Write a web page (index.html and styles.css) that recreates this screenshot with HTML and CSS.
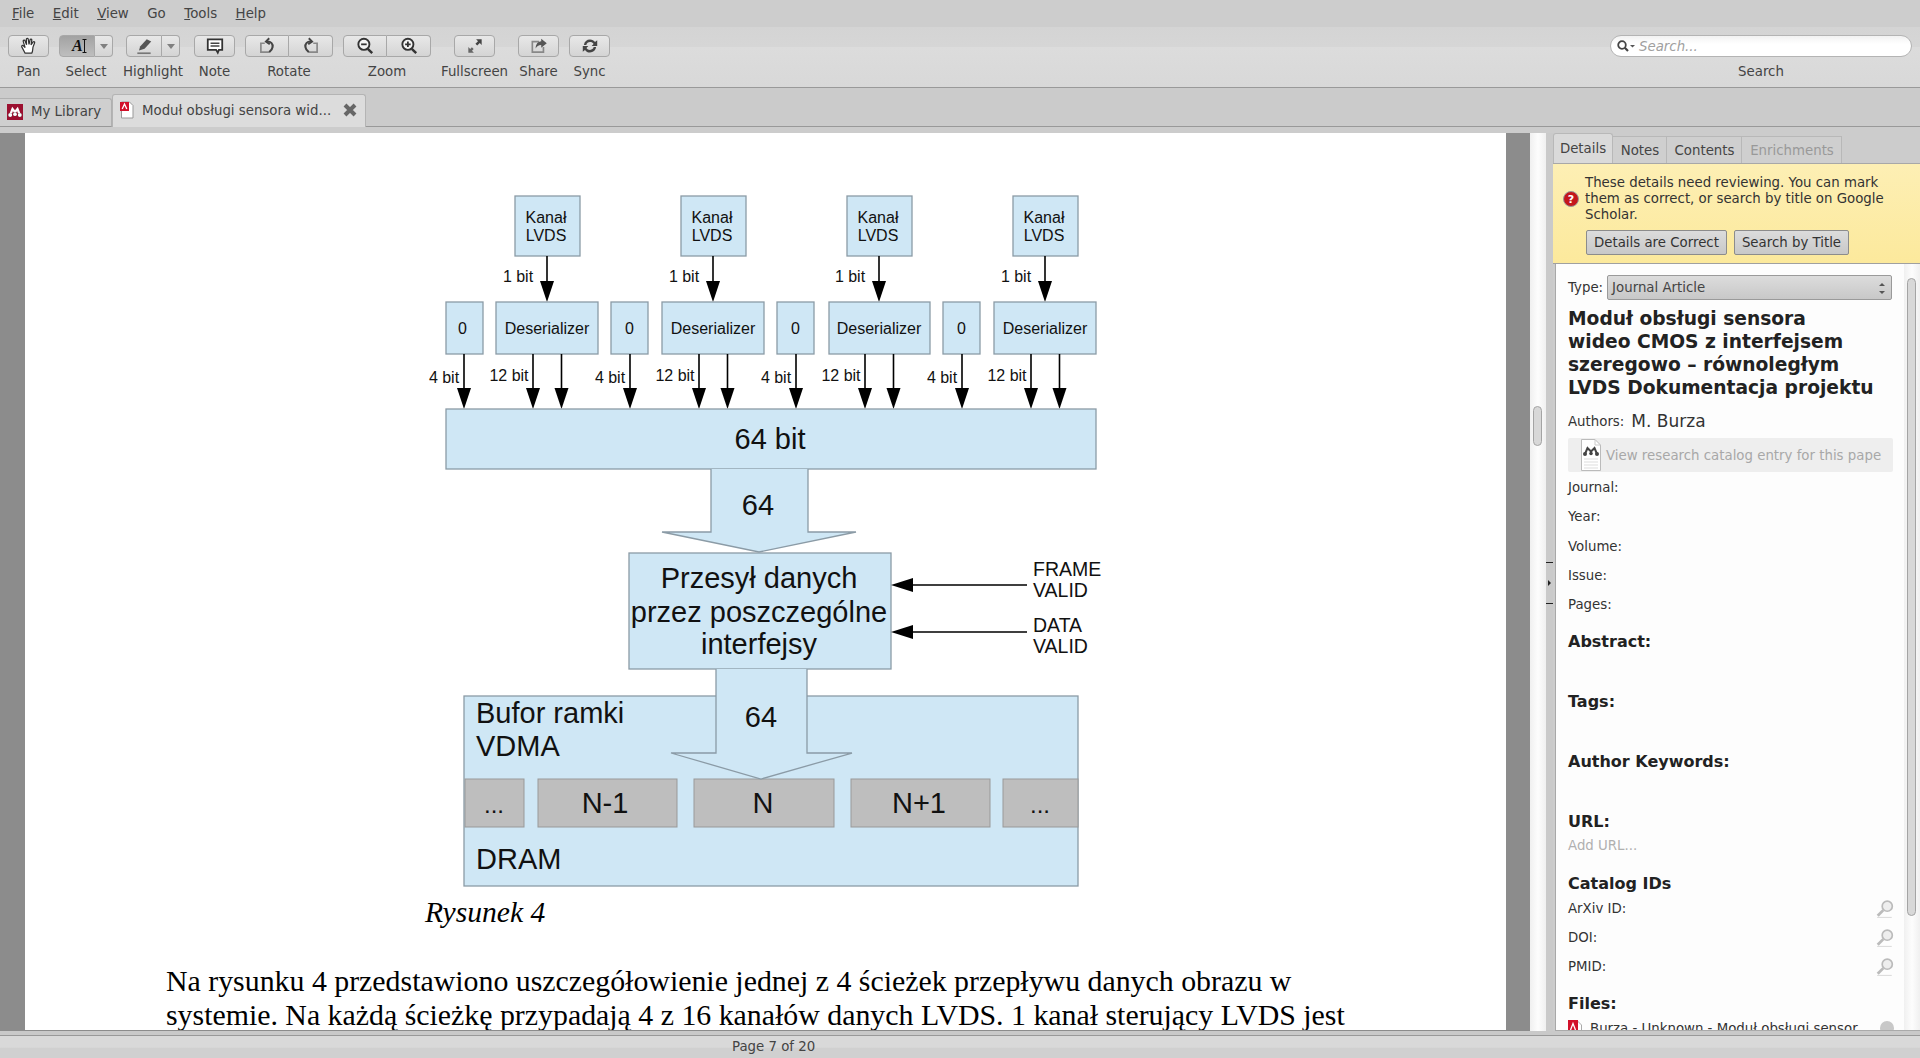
FILE: index.html
```html
<!DOCTYPE html>
<html lang="en">
<head>
<meta charset="UTF-8">
<meta name="viewport" content="width=device-width, initial-scale=1.0">
<title>Mendeley Desktop</title>
<link rel="stylesheet" href="styles.css">
</head>
<body>
<nav class="menubar">
  <span class="menu-item"><u>F</u>ile</span>
  <span class="menu-item"><u>E</u>dit</span>
  <span class="menu-item"><u>V</u>iew</span>
  <span class="menu-item">Go</span>
  <span class="menu-item"><u>T</u>ools</span>
  <span class="menu-item"><u>H</u>elp</span>
</nav>

<div class="toolbar">
  <div class="tool">
    <div class="btn-group"><button class="btn">
      <svg class="icon" viewBox="0 0 18 18"><path d="M5.5 15.5L2.5 9.8C2 8.7 3.3 8 4 8.9L5.5 10.4L3.8 4.8C3.5 3.7 5 3.3 5.4 4.3L6.8 7.8L6.6 2.9C6.6 1.8 8.1 1.8 8.3 2.9L9 7.5L10 3.4C10.3 2.4 11.7 2.7 11.5 3.8L10.8 8L12.7 5.4C13.4 4.6 14.5 5.3 14 6.3L12.6 10C12.2 12 12.5 14 11.5 15.5Z" fill="#fff" stroke="#333" stroke-width="1.1"/></svg>
    </button></div>
    <span class="tool-label">Pan</span>
  </div>
  <div class="tool tool-split gap-13">
    <div class="btn-group"><button class="btn btn-pressed btn-main">
      <svg class="icon" viewBox="0 0 20 20"><text x="5" y="15" class="icon-a">A</text><path d="M15.500 3.500h4M17.500 3.500v13M15.500 16.500h4" fill="none" stroke="#111" stroke-width="1"/></svg>
    </button><button class="btn btn-drop"><span class="caret"></span></button></div>
    <span class="tool-label">Select</span>
  </div>
  <div class="tool tool-split gap-14">
    <div class="btn-group"><button class="btn btn-main">
      <svg class="icon" viewBox="0 0 18 18"><path d="M5.500 9.500L11.500 3L15.500 5L9.500 11.500L4.500 13Z" fill="#555"/><path d="M3 15.500H15" stroke="#777" stroke-width="1.500"/></svg>
    </button><button class="btn btn-drop"><span class="caret"></span></button></div>
    <span class="tool-label">Highlight</span>
  </div>
  <div class="tool">
    <div class="btn-group"><button class="btn">
      <svg class="icon" viewBox="0 0 18 18"><path d="M2.500 3H15.500V12.500H12.500L11.500 15L10 12.500H2.500Z" fill="#fff" stroke="#333" stroke-width="1.600"/><path d="M5 6.500H13M5 9H13" stroke="#444" stroke-width="1.200"/></svg>
    </button></div>
    <span class="tool-label">Note</span>
  </div>
  <div class="tool tool-pair">
    <div class="btn-group"><button class="btn btn-half">
      <svg class="icon" viewBox="0 0 18 18"><path d="M7 6.500H3.500V14.500H11" fill="none" stroke="#888" stroke-width="1.500"/><path d="M11 2L8 5L11.500 7.500" fill="none" stroke="#444" stroke-width="1.700"/><path d="M8.500 5C12.500 4.500 14.500 7 14 10C13.700 12 12.500 13.500 11 14.500" fill="none" stroke="#444" stroke-width="1.900"/></svg>
    </button><button class="btn btn-half">
      <svg class="icon" viewBox="0 0 18 18"><path d="M11 6.500H14.500V14.500H7" fill="none" stroke="#888" stroke-width="1.500"/><path d="M7 2L10 5L6.500 7.500" fill="none" stroke="#444" stroke-width="1.700"/><path d="M9.500 5C5.500 4.500 3.500 7 4 10C4.300 12 5.500 13.500 7 14.500" fill="none" stroke="#444" stroke-width="1.900"/></svg>
    </button></div>
    <span class="tool-label">Rotate</span>
  </div>
  <div class="tool tool-pair gap-23">
    <div class="btn-group"><button class="btn btn-half">
      <svg class="icon" viewBox="0 0 18 18"><circle cx="8" cy="7.500" r="5" fill="#f4f4f4" stroke="#333" stroke-width="1.700"/><path d="M11.500 11.500L15.500 15.500" stroke="#333" stroke-width="2.200"/><path d="M5.500 7.500H10.500" stroke="#333" stroke-width="1.600"/></svg>
    </button><button class="btn btn-half">
      <svg class="icon" viewBox="0 0 18 18"><circle cx="8" cy="7.500" r="5" fill="#f4f4f4" stroke="#333" stroke-width="1.700"/><path d="M11.500 11.500L15.500 15.500" stroke="#333" stroke-width="2.200"/><path d="M5.500 7.500H10.500M8 5V10" stroke="#333" stroke-width="1.600"/></svg>
    </button></div>
    <span class="tool-label">Zoom</span>
  </div>
  <div class="tool gap-23">
    <div class="btn-group"><button class="btn">
      <svg class="icon" viewBox="0 0 18 18"><path d="M10 3H15V8L13.300 6.300L11 8.600L9.400 7L11.700 4.700Z" fill="#444"/><path d="M3 15V10L4.700 11.700L6.200 10.200L7.800 11.800L6.300 13.300L8 15Z" fill="#666"/></svg>
    </button></div>
    <span class="tool-label">Fullscreen</span>
  </div>
  <div class="tool">
    <div class="btn-group"><button class="btn">
      <svg class="icon" viewBox="0 0 18 18"><path d="M9 5H3V14.500H13V10" fill="none" stroke="#888" stroke-width="1.500"/><path d="M11 2.500L16 6.500L11 10.500V8.200C8.500 8.200 7 9.300 6 11.300C6 7.500 8 5 11 4.800Z" fill="#555"/></svg>
    </button></div>
    <span class="tool-label">Share</span>
  </div>
  <div class="tool">
    <div class="btn-group"><button class="btn">
      <svg class="icon" viewBox="0 0 18 18"><path d="M3.500 8C4 5 6.200 3.200 9 3.200C11 3.200 12.500 4 13.500 5.500L15.500 3.800V9H10.500L12.200 7.200C11.500 6 10.400 5.500 9 5.500C7.300 5.500 6 6.500 5.700 8Z" fill="#444"/><path d="M14.500 10C14 13 11.800 14.800 9 14.800C7 14.800 5.500 14 4.500 12.500L2.500 14.200V9H7.500L5.800 10.800C6.500 12 7.600 12.500 9 12.500C10.700 12.500 12 11.500 12.300 10Z" fill="#444"/></svg>
    </button></div>
    <span class="tool-label">Sync</span>
  </div>
  <div class="tool tool-search">
    <div class="search-box">
      <svg class="search-icon" viewBox="0 0 20 14"><circle cx="6" cy="6" r="3.800" fill="none" stroke="#444" stroke-width="1.800"/><path d="M8.800 8.800L12 12" stroke="#444" stroke-width="2.200"/><path d="M14 6H19L16.500 8.500Z" fill="#555"/></svg>
      <span class="search-hint">Search...</span>
    </div>
    <span class="tool-label">Search</span>
  </div>
</div>

<div class="tabbar">
  <div class="tab tab-library">
    <svg class="tab-icon-lib" viewBox="0 0 16 16"><rect width="16" height="16" fill="#9c1030"/><path d="M3.200 11L5.500 5L8 8L10.500 5L12.800 11" fill="none" stroke="#fff" stroke-width="2.200"/><circle cx="3.200" cy="11" r="2"/><circle cx="8" cy="10.200" r="1.900"/><circle cx="12.800" cy="11" r="2"/><g fill="#fff"><circle cx="3.200" cy="11" r="2"/><circle cx="8" cy="10.200" r="1.900"/><circle cx="12.800" cy="11" r="2"/></g></svg>
    <span>My Library</span>
  </div>
  <div class="tab tab-active">
    <svg class="tab-icon-pdf" viewBox="0 0 14 18"><path d="M1.500 1H9.500L13 4.500V17H1.500Z" fill="#fff" stroke="#999"/><rect x="0" y="1" width="9" height="9" fill="#d2112a"/><path d="M2.200 8L4.500 3L6.800 8" fill="none" stroke="#fff" stroke-width="1.300"/></svg>
    <span class="tab-title">Moduł obsługi sensora wid...</span>
    <svg class="tab-close" viewBox="0 0 16 16"><path d="M3 3L13 13M13 3L3 13" stroke="#666" stroke-width="4"/></svg>
  </div>
</div>

<div class="workspace">
  <div class="pdf-view">
    <div class="pdf-page">
      <svg class="diagram" viewBox="420 190 700 700">
        <defs>
          <path id="head" d="M-7 -21H7L0 0Z" fill="#000"/>
          <path id="headleft" d="M0 0L22 -7V7Z" fill="#000"/>
        </defs>

        <g>
          <rect class="box" x="515" y="196" width="65" height="60"/>
          <text class="t16" x="546" y="223">Kanał</text><text class="t16" x="546" y="241">LVDS</text>
          <path class="wire" d="M547 256V285"/><use href="#head" x="547" y="302"/>
          <text class="t16" x="518" y="282">1 bit</text>
          <rect class="box" x="446" y="302" width="37" height="52"/><text class="t16" x="462.500" y="334">0</text>
          <rect class="box" x="496" y="302" width="102" height="52"/><text class="t16" x="547" y="334">Deserializer</text>
          <path class="wire" d="M464 354V390M533 354V390M561.500 354V390"/>
          <use href="#head" x="464" y="409"/><use href="#head" x="533" y="409"/><use href="#head" x="561.500" y="409"/>
          <text class="t16" x="444" y="383">4 bit</text><text class="t16" x="509" y="381">12 bit</text>
        </g>
        <g>
          <rect class="box" x="681" y="196" width="65" height="60"/>
          <text class="t16" x="712" y="223">Kanał</text><text class="t16" x="712" y="241">LVDS</text>
          <path class="wire" d="M713 256V285"/><use href="#head" x="713" y="302"/>
          <text class="t16" x="684" y="282">1 bit</text>
          <rect class="box" x="611" y="302" width="37" height="52"/><text class="t16" x="629.500" y="334">0</text>
          <rect class="box" x="662" y="302" width="102" height="52"/><text class="t16" x="713" y="334">Deserializer</text>
          <path class="wire" d="M630 354V390M699 354V390M727.500 354V390"/>
          <use href="#head" x="630" y="409"/><use href="#head" x="699" y="409"/><use href="#head" x="727.500" y="409"/>
          <text class="t16" x="610" y="383">4 bit</text><text class="t16" x="675" y="381">12 bit</text>
        </g>
        <g>
          <rect class="box" x="847" y="196" width="65" height="60"/>
          <text class="t16" x="878" y="223">Kanał</text><text class="t16" x="878" y="241">LVDS</text>
          <path class="wire" d="M879 256V285"/><use href="#head" x="879" y="302"/>
          <text class="t16" x="850" y="282">1 bit</text>
          <rect class="box" x="777" y="302" width="37" height="52"/><text class="t16" x="795.500" y="334">0</text>
          <rect class="box" x="829" y="302" width="101" height="52"/><text class="t16" x="879" y="334">Deserializer</text>
          <path class="wire" d="M796 354V390M865 354V390M893.500 354V390"/>
          <use href="#head" x="796" y="409"/><use href="#head" x="865" y="409"/><use href="#head" x="893.500" y="409"/>
          <text class="t16" x="776" y="383">4 bit</text><text class="t16" x="841" y="381">12 bit</text>
        </g>
        <g>
          <rect class="box" x="1013" y="196" width="65" height="60"/>
          <text class="t16" x="1044" y="223">Kanał</text><text class="t16" x="1044" y="241">LVDS</text>
          <path class="wire" d="M1045 256V285"/><use href="#head" x="1045" y="302"/>
          <text class="t16" x="1016" y="282">1 bit</text>
          <rect class="box" x="943" y="302" width="37" height="52"/><text class="t16" x="961.500" y="334">0</text>
          <rect class="box" x="994" y="302" width="102" height="52"/><text class="t16" x="1045" y="334">Deserializer</text>
          <path class="wire" d="M962 354V390M1031 354V390M1059.500 354V390"/>
          <use href="#head" x="962" y="409"/><use href="#head" x="1031" y="409"/><use href="#head" x="1059.500" y="409"/>
          <text class="t16" x="942" y="383">4 bit</text><text class="t16" x="1007" y="381">12 bit</text>
        </g>

        <rect class="box" x="446" y="409" width="650" height="60"/>
        <text class="t29" x="770" y="449">64 bit</text>

        <path class="box" d="M711 469V532H662L759 552L856 532H808V469"/>
        <text class="t29" x="758" y="515">64</text>

        <rect class="box" x="629" y="553" width="262" height="116"/>
        <text class="t29" x="759" y="588">Przesył danych</text>
        <text class="t29" x="759" y="622">przez poszczególne</text>
        <text class="t29" x="759" y="654">interfejsy</text>

        <path class="wire" d="M1027 585H910M1027 632H910"/>
        <use href="#headleft" x="891" y="585"/><use href="#headleft" x="891" y="632"/>
        <text class="t20" x="1033" y="576">FRAME</text><text class="t20" x="1033" y="597">VALID</text>
        <text class="t20" x="1033" y="632">DATA</text><text class="t20" x="1033" y="653">VALID</text>

        <rect class="box" x="464" y="696" width="614" height="190"/>
        <text class="t29 left" x="476" y="723">Bufor ramki</text>
        <text class="t29 left" x="476" y="756">VDMA</text>
        <rect class="cell" x="465" y="779" width="59" height="48"/><text class="t24" x="494" y="813">...</text>
        <rect class="cell" x="538" y="779" width="139" height="48"/><text class="t29" x="605" y="813">N-1</text>
        <rect class="cell" x="694" y="779" width="140" height="48"/><text class="t29" x="763" y="813">N</text>
        <rect class="cell" x="851" y="779" width="139" height="48"/><text class="t29" x="919" y="813">N+1</text>
        <rect class="cell" x="1003" y="779" width="75" height="48"/><text class="t24" x="1040" y="813">...</text>
        <path class="box" d="M716 669V753H671L761 779L852 753H807V669"/>
        <text class="t29" x="761" y="727">64</text>
        <text class="t29 left" x="476" y="869">DRAM</text>
      </svg>
      <p class="caption">Rysunek 4</p>
      <p class="pdf-text">Na rysunku 4 przedstawiono uszczegółowienie jednej z 4 ścieżek przepływu danych obrazu w<br>systemie. Na każdą ścieżkę przypadają 4 z 16 kanałów danych LVDS. 1 kanał sterujący LVDS jest</p>
    </div>
    <div class="scrollbar"><div class="scroll-thumb pdf-thumb"></div></div>
  </div>

  <div class="splitter">
    <span class="split-mark"></span><span class="split-arrow"></span><span class="split-mark"></span>
  </div>

  <aside class="side">
    <div class="side-tabs">
      <span class="side-tab side-tab-active tab-w60">Details</span>
      <span class="side-tab tab-w54">Notes</span>
      <span class="side-tab tab-w75">Contents</span>
      <span class="side-tab side-tab-off tab-w100">Enrichments</span>
    </div>
    <div class="review">
      <div class="review-top">
        <svg class="review-icon" viewBox="0 0 16 16"><circle cx="8" cy="8" r="7.500" fill="#c4161c" stroke="#999"/><text x="8" y="12" class="icon-q">?</text></svg>
        <span class="review-text">These details need reviewing. You can mark them as correct, or search by title on Google Scholar.</span>
      </div>
      <div class="review-btns">
        <span class="review-btn">Details are Correct</span>
        <span class="review-btn">Search by Title</span>
      </div>
    </div>
    <div class="side-body">
      <div class="details">
        <div class="type-row">
          <span class="field-label">Type:</span>
          <div class="type-select">Journal Article<span class="spin"></span></div>
        </div>
        <h1 class="doc-title">Moduł obsługi sensora<br>wideo CMOS z interfejsem<br>szeregowo – równoległym<br>LVDS Dokumentacja projektu</h1>
        <div class="authors"><span class="field-label">Authors:</span><span class="author-name">M. Burza</span></div>
        <div class="catalog-link">
          <svg class="catalog-icon" viewBox="0 0 20 32"><path d="M.5 .5H14L19.500 6V31.500H.5Z" fill="#fff" stroke="#bbb"/><path d="M14 .5V6H19.500" fill="none" stroke="#ccc"/><path d="M3 20H17M3 23H17M3 26H17M3 29H17" stroke="#ddd"/><path d="M4 15L6.500 9L10 12.500L13.500 9L16 15" fill="none" stroke="#444" stroke-width="2"/><circle cx="4" cy="15" r="2" fill="#444"/><circle cx="10" cy="14.500" r="1.800" fill="#444"/><circle cx="16" cy="15" r="2" fill="#444"/></svg>
          <span class="catalog-text">View research catalog entry for this pape</span>
        </div>
        <div class="field">Journal:</div>
        <div class="field">Year:</div>
        <div class="field">Volume:</div>
        <div class="field">Issue:</div>
        <div class="field">Pages:</div>
        <h2 class="heading heading-tall">Abstract:</h2>
        <h2 class="heading heading-tall">Tags:</h2>
        <h2 class="heading heading-tall">Author Keywords:</h2>
        <h2 class="heading">URL:</h2>
        <div class="add-url">Add URL...</div>
        <h2 class="heading heading-ids">Catalog IDs</h2>
        <div class="field field-id">ArXiv ID:<svg class="lookup" viewBox="0 0 16 16"><circle cx="10" cy="5.500" r="4.500" fill="#eee" stroke="#bbb" stroke-width="1.500"/><path d="M6.500 9L1.500 14" stroke="#bbb" stroke-width="2.500"/><path d="M1 15.500H14" stroke="#ddd"/></svg></div>
        <div class="field field-id">DOI:<svg class="lookup" viewBox="0 0 16 16"><circle cx="10" cy="5.500" r="4.500" fill="#eee" stroke="#bbb" stroke-width="1.500"/><path d="M6.500 9L1.500 14" stroke="#bbb" stroke-width="2.500"/><path d="M1 15.500H14" stroke="#ddd"/></svg></div>
        <div class="field field-id">PMID:<svg class="lookup" viewBox="0 0 16 16"><circle cx="10" cy="5.500" r="4.500" fill="#eee" stroke="#bbb" stroke-width="1.500"/><path d="M6.500 9L1.500 14" stroke="#bbb" stroke-width="2.500"/><path d="M1 15.500H14" stroke="#ddd"/></svg></div>
        <h2 class="heading heading-files">Files:</h2>
        <div class="file-row">
          <svg class="file-icon" viewBox="0 0 14 16"><path d="M9 .5L13.500 5V16H5V.5Z" fill="#fff" stroke="#aaa"/><rect width="10" height="12" fill="#d2112a"/><path d="M2.500 10L5 3.500L7.500 10" fill="none" stroke="#fff" stroke-width="1.300"/></svg>
          <span class="file-name">Burza - Unknown - Moduł obsługi sensor</span>
          <span class="file-del"></span>
        </div>
      </div>
      <div class="scrollbar scrollbar-side"><div class="scroll-thumb side-thumb"></div></div>
    </div>
  </aside>
</div>

<footer class="statusbar"><span class="page-count">Page 7 of 20</span></footer>
</body>
</html>
```

FILE: styles.css
```css
* {
  box-sizing: border-box;
}
html, body {
  margin: 0;
  height: 100%;
}
body {
  display: flex;
  flex-direction: column;
  height: 1058px;
  overflow: hidden;
  background: #cccccc;
  color: #444444;
  font-family: "DejaVu Sans", sans-serif;
  font-size: 13.33px;
}

/* menu */
.menubar {
  display: flex;
  flex: none;
  gap: 18.5px;
  align-items: center;
  height: 27px;
  padding-left: 12px;
  background: #cdcdcd;
  color: #444444;
}

/* toolbar */
.toolbar {
  display: flex;
  flex: none;
  height: 61px;
  padding: 8px 8px 0 8px;
  border-bottom: 1px solid #999999;
  background: linear-gradient(#d4d4d4, #d6d6d6 33%, #dcdcdc 34%, #d8d8d8);
}
.tool {
  display: flex;
  flex: none;
  flex-direction: column;
  align-items: center;
  width: 41px;
  margin-right: 10px;
}
.tool-split { width: 54px; }
.tool-pair { width: 88px; }
.gap-13 { margin-right: 13px; }
.gap-14 { margin-right: 14px; }
.gap-23 { margin-right: 23px; }
.tool-search {
  width: 302px;
  margin-left: auto;
  margin-right: 0;
}
.tool-label {
  margin-top: 7px;
  white-space: nowrap;
  line-height: 16px;
}
.btn-group {
  display: flex;
  height: 22px;
}
.btn {
  display: flex;
  align-items: center;
  justify-content: center;
  width: 41px;
  height: 22px;
  padding: 0;
  border: 1px solid #a8a8a8;
  border-radius: 4px;
  background: linear-gradient(#e8e8e8, #d4d4d4);
}
.btn-main {
  width: 36px;
  border-radius: 4px 0 0 4px;
}
.btn-drop {
  width: 18px;
  border-left: none;
  border-radius: 0 4px 4px 0;
}
.btn-half {
  width: 44px;
  border-radius: 4px 0 0 4px;
}
.btn-half + .btn-half {
  border-left: none;
  border-radius: 0 4px 4px 0;
}
.btn-pressed {
  background: linear-gradient(#a2a2a2, #bebebe);
}
.icon {
  display: block;
  width: 20px;
  height: 20px;
}
.icon-a {
  font-family: "Liberation Serif", serif;
  font-size: 16px;
  font-style: italic;
  font-weight: bold;
  fill: #111111;
}
.caret {
  width: 0;
  height: 0;
  border-top: 5px solid #808080;
  border-left: 4px solid transparent;
  border-right: 4px solid transparent;
}
.search-box {
  display: flex;
  align-items: center;
  gap: 3px;
  width: 100%;
  height: 22px;
  padding-left: 5px;
  border: 1px solid #b4b4b4;
  border-radius: 11px;
  background: linear-gradient(#f2f2f2, #ffffff 40%);
}
.search-icon {
  width: 20px;
  height: 14px;
}
.search-hint {
  color: #a0a0a0;
  font-style: italic;
}

/* document tabs */
.tabbar {
  display: flex;
  flex: none;
  align-items: flex-end;
  height: 39px;
  border-bottom: 1px solid #999999;
  background: #cbcbcb;
}
.tab {
  display: flex;
  align-items: center;
  padding-bottom: 2px;
}
.tab-library {
  gap: 8px;
  width: 112px;
  height: 29px;
  margin-bottom: -1px;
  padding-left: 7px;
  border: 1px solid #b0b0b0;
  border-left: none;
  border-bottom: 1px solid #999999;
  border-radius: 0 3px 0 0;
  background: #cfcfcf;
}
.tab-icon-lib {
  width: 16px;
  height: 16px;
}
.tab-active {
  width: 254px;
  height: 33px;
  margin-bottom: -1px;
  padding-left: 7px;
  border: 1px solid #b4b4b4;
  border-bottom: none;
  border-radius: 3px 3px 0 0;
  background: #dcdcdc;
}
.tab-icon-pdf {
  width: 14px;
  height: 18px;
  margin-right: 8px;
}
.tab-title {
  white-space: nowrap;
}
.tab-close {
  width: 16px;
  height: 16px;
  margin-left: 11px;
}

/* main area */
.workspace {
  display: flex;
  flex: none;
  height: 898px;
  margin-top: 6px;
}
.pdf-view {
  display: flex;
  width: 1546px;
  height: 898px;
  background: #8c8c8c;
}
.pdf-page {
  width: 1481px;
  height: 897px;
  margin: 0 24px 0 25px;
  overflow: hidden;
  background: #ffffff;
}
.diagram {
  display: block;
  width: 700px;
  height: 700px;
  margin: 57px 0 0 395px;
}
.box {
  fill: #cfe7f5;
  stroke: #8b9ba6;
  stroke-width: 1.3;
}
.cell {
  fill: #bebebe;
  stroke: #999999;
  stroke-width: 1;
}
.wire {
  fill: none;
  stroke: #000000;
  stroke-width: 1.6;
}
.diagram text {
  font-family: "Liberation Sans", sans-serif;
  text-anchor: middle;
  fill: #111111;
}
.t16 { font-size: 16px; }
.t20 { font-size: 19.5px; text-anchor: start !important; }
.t24 { font-size: 24px; }
.t29 { font-size: 29px; }
.left { text-anchor: start !important; }
.caption {
  margin: 5px 0 0 400px;
  font-family: "Liberation Serif", serif;
  font-size: 29.6px;
  font-style: italic;
  line-height: 34px;
  color: #000000;
}
.pdf-text {
  margin: 35px 0 0 141px;
  font-family: "Liberation Serif", serif;
  font-size: 29.85px;
  line-height: 34px;
  white-space: nowrap;
  color: #000000;
}
.scrollbar {
  position: relative;
  flex: none;
  width: 16px;
  background: linear-gradient(to right, #f0f0f0, #fdfdfd 50%, #f0f0f0);
}
.scroll-thumb {
  position: absolute;
  left: 3px;
  width: 9px;
  border: 1px solid #a4a4a4;
  border-radius: 5px;
  background: #d8d8d8;
}
.pdf-thumb {
  top: 273px;
  height: 40px;
}
.splitter {
  display: flex;
  flex: none;
  flex-direction: column;
  align-items: center;
  gap: 17px;
  width: 7px;
  padding-top: 429px;
  background: #cacaca;
}
.split-mark {
  width: 7px;
  height: 1px;
  background: #222222;
}
.split-arrow {
  width: 0;
  height: 0;
  border-left: 3px solid #222222;
  border-top: 3px solid transparent;
  border-bottom: 3px solid transparent;
}

/* details panel */
.side {
  display: flex;
  flex-direction: column;
  width: 367px;
  height: 898px;
}
.side-tabs {
  display: flex;
  flex: none;
  align-items: flex-end;
  height: 30px;
}
.side-tab {
  display: flex;
  align-items: center;
  justify-content: center;
  height: 27px;
  padding-left: 1px;
  border: 1px solid #b8b8b8;
  border-bottom: none;
  border-left: none;
  background: #cfcfcf;
}
.tab-w60 { width: 60px; }
.tab-w54 { width: 54px; }
.tab-w75 { width: 75px; }
.tab-w100 { width: 100px; }
.side-tab-active {
  height: 30px;
  padding: 0 0 1px 0;
  border-left: 1px solid #b8b8b8;
  border-radius: 3px 3px 0 0;
  background: #dadada;
}
.side-tab-off {
  color: #999999;
}
.review {
  flex: none;
  height: 101px;
  padding: 11px 8px 0 10px;
  border-top: 1px solid #a8a8a8;
  border-bottom: 1px solid #a0a0a0;
  background: linear-gradient(#fdefb4, #fce99c);
  color: #333333;
}
.review-top {
  display: flex;
  align-items: center;
  gap: 6px;
  line-height: 16px;
}
.review-icon {
  flex: none;
  width: 16px;
  height: 16px;
}
.review-text {
  width: 310px;
}
.icon-q {
  font-size: 11px;
  font-weight: bold;
  text-anchor: middle;
  fill: #ffffff;
}
.review-btns {
  display: flex;
  gap: 7px;
  margin: 7px 0 0 23px;
}
.review-btn {
  display: flex;
  align-items: center;
  height: 25px;
  padding: 0 7px;
  border: 1px solid #8c8c8c;
  border-radius: 2px;
  background: linear-gradient(#dcdcdc, #c8c8c8);
}
.side-body {
  display: flex;
  flex: 1;
  min-height: 0;
  margin-left: 2px;
  border-left: 1px solid #a8a8a8;
  border-bottom: 1px solid #aaaaaa;
  background: #fdfdfd;
}
.details {
  flex: 1;
  padding: 11px 10px 0 12px;
  overflow: hidden;
  color: #333333;
}
.scrollbar-side {
  width: 16px;
}
.side-thumb {
  top: 14px;
  height: 638px;
}
.type-row {
  display: flex;
  align-items: center;
  gap: 4px;
}
.type-select {
  position: relative;
  flex: none;
  width: 285px;
  height: 25px;
  padding-left: 4px;
  border: 1px solid #9a9a9a;
  border-radius: 2px;
  line-height: 23px;
  background: linear-gradient(#dcdcdc, #c8c8c8);
  color: #444444;
}
.spin {
  position: absolute;
  top: 7px;
  right: 6px;
  width: 6px;
  height: 11px;
}
.spin::before,
.spin::after {
  content: "";
  position: absolute;
  left: 0;
  border-left: 3px solid transparent;
  border-right: 3px solid transparent;
}
.spin::before {
  top: 0;
  border-bottom: 3px solid #555555;
}
.spin::after {
  bottom: 0;
  border-top: 3px solid #555555;
}
.doc-title {
  margin: 7px 0 0 0;
  font-size: 18.67px;
  font-weight: bold;
  line-height: 23px;
  white-space: nowrap;
  color: #222222;
}
.authors {
  display: flex;
  align-items: center;
  gap: 7px;
  height: 24px;
  margin-top: 10px;
}
.author-name {
  font-size: 17px;
}
.catalog-link {
  display: flex;
  align-items: center;
  gap: 5px;
  width: 325px;
  height: 34px;
  margin-top: 5px;
  padding-left: 13px;
  overflow: hidden;
  border-radius: 2px;
  background: #eeeeee;
}
.catalog-icon {
  flex: none;
  width: 20px;
  height: 32px;
}
.catalog-text {
  white-space: nowrap;
  color: #a8a8a8;
}
.field {
  display: flex;
  align-items: center;
  justify-content: space-between;
  height: 29.25px;
}
.catalog-link + .field {
  margin-top: 1px;
}
.field-id {
  height: 29px;
}
.lookup {
  width: 18px;
  height: 18px;
}
.heading {
  height: 20px;
  margin: 0;
  font-size: 16px;
  font-weight: bold;
  line-height: 20px;
  color: #222222;
}
.heading-tall {
  height: 60px;
}
.field + .heading-tall {
  margin-top: 13px;
}
.add-url {
  height: 20px;
  margin-top: 4px;
  color: #b0b0b0;
  line-height: 20px;
}
.heading-ids {
  margin-top: 18px;
}
.heading-files {
  margin-top: 13px;
}
.file-row {
  display: flex;
  align-items: center;
  height: 16px;
  margin-top: 6px;
}
.file-icon {
  flex: none;
  width: 14px;
  height: 16px;
  margin-right: 8px;
}
.file-name {
  flex: 1;
  white-space: nowrap;
  overflow: hidden;
}
.file-del {
  flex: none;
  width: 14px;
  height: 14px;
  border-radius: 50%;
  background: #c8c8c8;
}

/* status */
.statusbar {
  flex: none;
  height: 27px;
  margin-top: 0;
  padding-top: 4px;
  background: #c9c9c9;
}
.page-count {
  display: block;
  height: 23px;
  padding-left: 732px;
  border-top: 1px solid #999999;
  line-height: 22px;
  background: linear-gradient(#d9d9d9, #d9d9d9 52%, #d0d0d0 53%);
}
```
